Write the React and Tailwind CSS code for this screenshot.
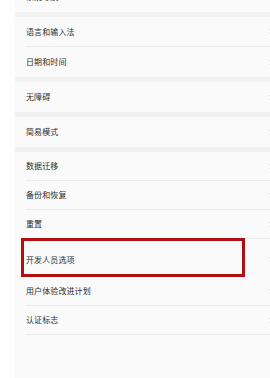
import { ChevronRight } from 'lucide-react';

const groups = [
    ['系统导航'],
    ['语言和输入法', '日期和时间'],
    ['无障碍'],
    ['简易模式'],
    ['数据迁移', '备份和恢复', '重置', '开发人员选项', '用户体验改进计划', '认证标志'],
];

const Row = ({ label, last, marked, tight }) => (
    <div className={`relative flex items-center pl-[11px] pr-0 ${marked ? 'h-[38px] pt-[3px]' : tight ? 'h-[29px]' : 'h-[30px]'}`}>
        <div className={`flex-1 flex items-center h-full ${last || marked ? '' : 'border-b border-[#ececec]'}`}>
            <span className="flex-1 text-[8px] leading-none text-[#2e2e2e] tracking-[0.1px]">{label}</span>
            <ChevronRight size={9} strokeWidth={1.5} className="text-[#cfcfcf] -mr-[5px]" />
        </div>
        {marked && (
            <div className="absolute left-[6px] top-[-1px] w-[224px] h-[39px] border-[3px] border-[#b0100f]" />
        )}
    </div>
);

export default function App() {
    return (
        <div className="w-[270px] h-[378px] overflow-hidden bg-white" style={{ fontFamily: '"Noto Sans CJK SC", "Noto Sans", sans-serif' }}>
            <div className="ml-[15px] h-[400px] bg-[#fafafa] -mt-[18px] flex flex-col">
                {groups.map((g, gi) => (
                    <div key={gi} className={gi > 0 ? 'border-t-[5px] border-[#f1f1f1]' : ''}>
                        {g.map((label, i) => (
                            <Row
                                key={label}
                                label={label}
                                last={i === g.length - 1 && gi < groups.length - 1}
                                marked={label === '开发人员选项'}
                                tight={gi === groups.length - 1}
                            />
                        ))}
                    </div>
                ))}
            </div>
        </div>
    );
}
